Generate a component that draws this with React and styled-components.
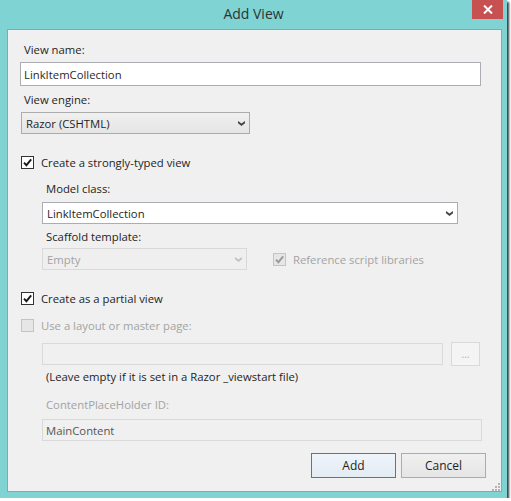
import React from "react";
import styled, { createGlobalStyle } from "styled-components";

const GlobalStyle = createGlobalStyle`
  html, body {
    margin: 0;
    padding: 0;
    background: #ffffff;
  }
  body {
    font-family: "Segoe UI", "Open Sans", "Noto Sans", sans-serif;
    font-size: 11.3px;
    color: #1e1e1e;
  }
`;

const Chevron = ({ disabled }) => (
  <svg width="7" height="5" viewBox="0 0 7 5">
    <polygon
      points="0,0 3.5,2.4 7,0 7,2.2 3.5,5 0,2.2"
      fill={disabled ? "#c2c2c2" : "#444444"}
    />
  </svg>
);

const Check = ({ disabled }) => (
  <svg width="11" height="11" viewBox="0 0 11 11">
    <path
      d="M2 5.6 L4.4 8.2 L9.2 2.4"
      fill="none"
      stroke={disabled ? "#9a9a9a" : "#1a1a1a"}
      strokeWidth="1.9"
    />
  </svg>
);

const CheckRow = ({ checked, disabled, children, ...rest }) => (
  <CheckLine $disabled={disabled} {...rest}>
    <Box $disabled={disabled}>{checked && <Check disabled={disabled} />}</Box>
    <span>{children}</span>
  </CheckLine>
);

const App = () => {
  return (
    <>
      <GlobalStyle />
      <Window>
        <TitleBar>
          Add View
          <CloseButton>
            <svg width="10" height="9" viewBox="0 0 10 9">
              <path d="M1 0.5 L9 8.5 M9 0.5 L1 8.5" stroke="#fff" strokeWidth="2" />
            </svg>
          </CloseButton>
        </TitleBar>
        <Panel>
          <Label $top={12}>View name:</Label>
          <TextBox $top={4} $width={461} $height={24}>
            LinkItemCollection
          </TextBox>
          <Label $top={6}>View engine:</Label>
          <Combo $top={4} $width={229} $shift={1}>
            <span>Razor (CSHTML)</span>
            <Chevron />
          </Combo>

          <CheckRow $top={20} checked>
            Create a strongly-typed view
          </CheckRow>
          <Indent>
            <Label $top={11}>Model class:</Label>
            <Combo $top={5} $width={416} $white>
              <span>LinkItemCollection</span>
              <Chevron />
            </Combo>
            <Label $top={5}>Scaffold template:</Label>
            <Row $top={3}>
              <Combo $width={205} $disabled>
                <span>Empty</span>
                <Chevron disabled />
              </Combo>
              <CheckRow checked disabled $gap={26}>
                Reference script libraries
              </CheckRow>
            </Row>
          </Indent>

          <CheckRow $top={20} checked>
            Create as a partial view
          </CheckRow>
          <CheckRow $top={11} disabled>
            Use a layout or master page:
          </CheckRow>
          <Indent>
            <Row $top={9}>
              <TextBox $width={401} $height={22} $disabled />
              <BrowseButton>...</BrowseButton>
            </Row>
            <Label $top={3}>(Leave empty if it is set in a Razor _viewstart file)</Label>
            <Label $top={12} $disabled>
              ContentPlaceHolder ID:
            </Label>
            <TextBox $top={6} $width={440} $height={22} $disabled $darkText>
              MainContent
            </TextBox>
          </Indent>

          <Buttons>
            <Button $default>Add</Button>
            <Button>Cancel</Button>
          </Buttons>
          <Grip>
            <svg width="10" height="10" viewBox="0 0 10 10">
              {[
                [7, 1],
                [4, 4],
                [7, 4],
                [1, 7],
                [4, 7],
                [7, 7],
              ].map(([x, y]) => (
                <rect key={`${x}-${y}`} x={x} y={y} width="2" height="2" fill="#b4b4b4" />
              ))}
            </svg>
          </Grip>
        </Panel>
      </Window>
    </>
  );
};

const Window = styled.div`
  width: 507px;
  height: 498px;
  background: #7fd3d3;
  box-shadow: 2px 2px 2px rgba(20, 30, 30, 0.85);
  display: flex;
  flex-direction: column;
`;

const TitleBar = styled.div`
  position: relative;
  height: 29px;
  display: flex;
  justify-content: center;
  padding-top: 4px;
  box-sizing: border-box;
  font-size: 14px;
  line-height: 20px;
  color: #2b3535;
`;

const CloseButton = styled.div`
  position: absolute;
  top: 0;
  right: 4px;
  width: 31px;
  height: 19px;
  background: #c75050;
  display: flex;
  align-items: center;
  justify-content: center;
`;

const Panel = styled.div`
  position: relative;
  flex: 1;
  margin: 0 5px 6px 7px;
  padding: 0 15px 0 12px;
  background: #f0f0f0;
  border: 1px solid #83aaaa;
  display: flex;
  flex-direction: column;
  align-items: flex-start;
`;

const Label = styled.div`
  margin-top: ${(p) => p.$top || 0}px;
  padding-left: 4px;
  height: 16px;
  line-height: 16px;
  white-space: nowrap;
  color: ${(p) => (p.$disabled ? "#a3a3a3" : "#1e1e1e")};
`;

const TextBox = styled.div`
  margin-top: ${(p) => p.$top || 0}px;
  width: ${(p) => p.$width}px;
  height: ${(p) => p.$height}px;
  box-sizing: border-box;
  padding-left: 3px;
  display: flex;
  align-items: center;
  background: ${(p) => (p.$disabled ? "#f0f0f0" : "#ffffff")};
  border: 1px solid ${(p) => (p.$disabled ? "#d9d9d9" : "#abadb3")};
  color: ${(p) => (p.$darkText ? "#555555" : p.$disabled ? "#a3a3a3" : "#2a2a2a")};
  white-space: nowrap;
`;

const Combo = styled.div`
  margin-top: ${(p) => p.$top || 0}px;
  margin-left: ${(p) => p.$shift || 0}px;
  width: ${(p) => p.$width}px;
  height: 22px;
  box-sizing: border-box;
  padding: 0 4px 0 4px;
  display: flex;
  align-items: center;
  justify-content: space-between;
  border: 1px solid
    ${(p) => (p.$disabled ? "#d9d9d9" : p.$white ? "#abadb3" : "#acacac")};
  background: ${(p) =>
    p.$disabled
      ? "#efefef"
      : p.$white
      ? "#ffffff"
      : "linear-gradient(#f0f0f0, #e5e5e5)"};
  color: ${(p) => (p.$disabled ? "#a3a3a3" : "#1e1e1e")};
  white-space: nowrap;
`;

const Row = styled.div`
  margin-top: ${(p) => p.$top || 0}px;
  display: flex;
  align-items: center;
`;

const Indent = styled.div`
  margin-left: 22px;
  display: flex;
  flex-direction: column;
  align-items: flex-start;
`;

const CheckLine = styled.div`
  margin-top: ${(p) => p.$top || 0}px;
  margin-left: ${(p) => (p.$gap ? p.$gap : 1)}px;
  height: 16px;
  display: flex;
  align-items: center;
  gap: 7px;
  white-space: nowrap;
  color: ${(p) => (p.$disabled ? "#a3a3a3" : "#1e1e1e")};
`;

const Box = styled.div`
  width: 13px;
  height: 13px;
  box-sizing: border-box;
  border: 1px solid ${(p) => (p.$disabled ? "#c4c4c4" : "#333333")};
  background: ${(p) => (p.$disabled ? "#e6e6e6" : "#ffffff")};
  display: flex;
  align-items: center;
  justify-content: center;
`;

const BrowseButton = styled.div`
  margin-left: 8px;
  width: 29px;
  height: 24px;
  box-sizing: border-box;
  border: 1px solid #d9d9d9;
  background: #f4f4f4;
  color: #b0b0b0;
  font-size: 10px;
  display: flex;
  align-items: center;
  justify-content: center;
`;

const Buttons = styled.div`
  margin-top: 12px;
  align-self: flex-end;
  display: flex;
  gap: 5px;
`;

const Button = styled.div`
  width: 85px;
  height: 25px;
  box-sizing: border-box;
  border: 1px solid ${(p) => (p.$default ? "#3c7fb1" : "#acacac")};
  background: ${(p) =>
    p.$default ? "linear-gradient(#eef4fa, #e3ebf3)" : "linear-gradient(#f0f0f0, #e5e5e5)"};
  display: flex;
  align-items: center;
  justify-content: center;
  color: #1e1e1e;
  font-size: 12px;
`;

const Grip = styled.div`
  position: absolute;
  right: 0;
  bottom: 1px;
  width: 10px;
  height: 10px;
`;

export default App;
